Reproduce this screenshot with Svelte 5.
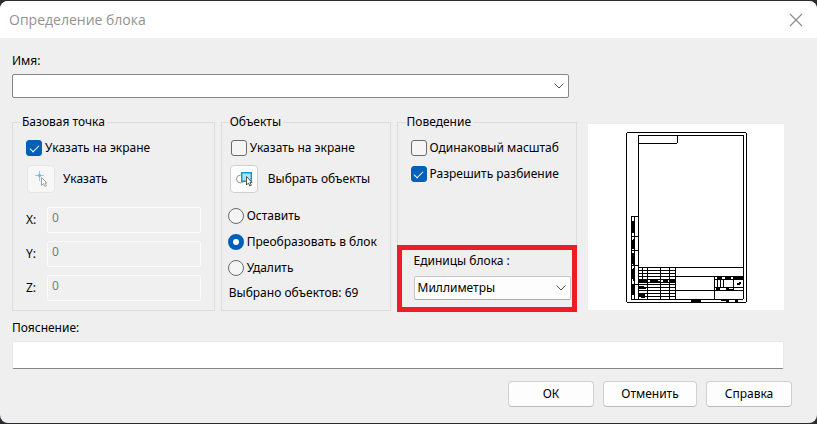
<script lang="ts">
  type Axis = 'X' | 'Y' | 'Z';

  const axes: Axis[] = ['X', 'Y', 'Z'];
  const units = ['Миллиметры', 'Сантиметры', 'Метры', 'Дюймы'];
  const modes = [
    { id: 'keep', label: 'Оставить' },
    { id: 'convert', label: 'Преобразовать в блок' },
    { id: 'remove', label: 'Удалить' },
  ];

  let blockName = $state('');
  let pickPoint = $state(true);
  let pickObjects = $state(false);
  let uniformScale = $state(false);
  let allowExplode = $state(true);
  let mode = $state('convert');
  let unit = $state('Миллиметры');
  let note = $state('');
  let point = $state<Record<Axis, string>>({ X: '0', Y: '0', Z: '0' });
  let selectedCount = 69;
</script>

<div class="dialog" role="dialog" aria-labelledby="dialog-title">
  <header>
    <h1 id="dialog-title">Определение блока</h1>
    <button class="close" aria-label="Закрыть">
      <svg width="14" height="14" viewBox="0 0 14 14"><path d="M1 1 13 13M13 1 1 13" /></svg>
    </button>
  </header>

  <main>
    <label class="field-label" for="block-name">Имя:</label>
    <div class="combo name-combo">
      <select id="block-name" bind:value={blockName}>
        <option value=""></option>
      </select>
      <svg width="10" height="6" viewBox="0 0 10 6"><path d="M.5.5 5 5 9.5.5" /></svg>
    </div>

    <div class="columns">
      <fieldset class="point">
        <legend>Базовая точка</legend>
        <label class="option"><input type="checkbox" bind:checked={pickPoint} />Указать на экране</label>
        <div class="pick">
          <button class="tool" id="pick-point" disabled={pickPoint}>
            <svg width="16" height="18" viewBox="0 0 16 18">
              <path class="spark" d="M6.500 1v10M2 5.500h9" />
              <path class="spark-core" d="M6.500 3 7.500 4.500 9 5.500 7.500 6.500 6.500 8 5.500 6.500 4 5.500 5.500 4.500Z" />
              <path class="arrow faded" d="M8.500 7.500v8l2-2 1.300 3 1.500-.7-1.300-2.800H14Z" />
            </svg>
          </button>
          <label for="pick-point">Указать</label>
        </div>
        <div class="coords">
          {#each axes as axis}
            <label for="coord-{axis}">{axis}:</label>
            <input id="coord-{axis}" type="text" bind:value={point[axis]} disabled={pickPoint} />
          {/each}
        </div>
      </fieldset>

      <fieldset class="objects">
        <legend>Объекты</legend>
        <label class="option"><input type="checkbox" bind:checked={pickObjects} />Указать на экране</label>
        <div class="pick">
          <button class="tool" id="pick-objects">
            <svg width="18" height="18" viewBox="0 0 18 18">
              <circle class="ring" cx="5.500" cy="9" r="4" />
              <rect class="window" x="6.750" y="2.750" width="9.500" height="8.500" />
              <path class="arrow" d="M11.500 6.500v8.500l2-2 1.300 3 1.500-.7-1.300-2.800H17Z" />
            </svg>
          </button>
          <label for="pick-objects">Выбрать объекты</label>
        </div>
        <div class="modes">
          {#each modes as m}
            <label class="option"><input type="radio" name="mode" value={m.id} bind:group={mode} />{m.label}</label>
          {/each}
        </div>
        <p class="count">Выбрано объектов: {selectedCount}</p>
      </fieldset>

      <div class="stack">
        <fieldset class="behavior">
          <legend>Поведение</legend>
          <label class="option"><input type="checkbox" bind:checked={uniformScale} />Одинаковый масштаб</label>
          <label class="option"><input type="checkbox" bind:checked={allowExplode} />Разрешить разбиение</label>
        </fieldset>
        <div class="units">
          <label for="units">Единицы блока :</label>
          <div class="combo">
            <select id="units" bind:value={unit}>
              {#each units as u}<option>{u}</option>{/each}
            </select>
            <svg width="10" height="6" viewBox="0 0 10 6"><path d="M.5.5 5 5 9.5.5" /></svg>
          </div>
        </div>
      </div>

      <div class="preview">
        <svg viewBox="0 0 196 186" shape-rendering="crispEdges" aria-hidden="true">
          <!-- sheet and frame -->
          <path d="M39 8.500H158M38.500 9V178M158.500 9V178M39 178.500H158" />
          <path d="M50.500 11.500H155.500V175.500H50.500ZM50.500 19.500H89.500V11.500" />
          <!-- binding strip -->
          <path d="M50 92.500H43.500V175.500H50M46.500 92V175M43 112.500H50M43 126.500H50M43 141.500H50M43 160.500H50" />
          <path class="ink" d="M44 97h2v-1h1v13h-3zM44 116h1v-1h1v2h1v8h-3zM44 129h3v12h-2v-1h-1zM44 145h1v-1h1v2h1v11h-2v-2h-1zM44 161h2v1h1v11h-1v-2h-2z" />
          <!-- title block -->
          <path d="M50 143.500H155M50 152.500H155M87.500 143V175M87 166.500H155" />
          <path d="M50 146.500H87M50 149.500H87M50 155.500H87M50 158.500H87M50 160.500H87M50 163.500H87M50 166.500H87M50 169.500H87M50 172.500H87" />
          <path d="M54.500 143V158M59.500 143V175M72.500 143V175M81.500 143V175" />
          <path class="ink" d="M51 156h8v2h-8zM62 156h8v2h-8zM70 157h3v1h-3zM75 156h5v2h-5zM82 156h5v2h-5zM51 162h5v1h-5zM51 164h7v1h-7zM51 170h6v2h-6zM53 173h4v1h-4z" />
          <path d="M126.500 152V175M126 155.500H155M126 163.500H155M129.500 155V163M132.500 155V163M135.500 155V163M145.500 152V166" />
          <path class="ink" d="M129 153h5v2h-5zM137 153h6v2h-6zM146 153h9v2h-9zM149 159h2v-1h1v3h-3zM152 158h1v2h-1zM128 164h4v2h-4zM138 164h3v1h4v1h-7z" />
          <path class="ink" d="M103 176h10v2h-10zM133 176h8v2h-3v-1h-5zM147 176h3v2h-3z" />
        </svg>
      </div>
    </div>

    <label class="field-label" for="note">Пояснение:</label>
    <input id="note" class="note" type="text" bind:value={note} />
  </main>

  <footer>
    <button>ОК</button>
    <button class="wide">Отменить</button>
    <button>Справка</button>
  </footer>
</div>

<style>
  :global(body) { background: #2b2a2c; }

  .dialog {
    margin: 1px 0 2px;
    border-radius: 8px;
    overflow: hidden;
    background: #efefef;
    color: #000;
    font-family: "Noto Sans", Tahoma, sans-serif;
    font-size: 12px;
    line-height: 16px;
  }

  .dialog * { box-sizing: border-box; }

  input, select, button { font: inherit; color: inherit; margin: 0; }

  header {
    display: flex; align-items: center; justify-content: space-between;
    height: 37px; padding: 0 14px 0 9px;
    background: #fff;
  }

  h1 { margin: 0; font: 400 14px/20px "Open Sans", "Noto Sans", sans-serif; color: #929292; }

  .close { display: flex; padding: 0; border: 0; background: none; }
  .close path { fill: none; stroke: #8c8c8c; stroke-width: 1.2; }

  main { padding: 15px 33px 0 12px; }

  .field-label { display: block; margin-bottom: 5px; }

  .combo { position: relative; }
  .combo select {
    display: block; appearance: none;
    width: 100%; height: 24px; padding: 0 24px 0 3px;
    border: 1px solid #c6c6c6; border-bottom-color: #ababab; border-radius: 2px;
    background: #fdfdfd;
  }
  .combo svg { position: absolute; right: 5px; top: 9px; pointer-events: none; }
  .combo path { fill: none; stroke: #555; }
  .name-combo { width: calc(100% - 215px); }
  .name-combo select { border-color: #868686; background: #fff; }

  .columns {
    display: grid;
    grid-template-columns: 203fr 170fr 181fr 201fr;
    column-gap: 6px;
    margin: 17px 0 9px;
  }

  fieldset { min-width: 0; margin: 0; border: 1px solid #dcdcdc; padding: 11px 13px 9px; }
  legend { margin-left: -5px; padding: 0 2px 0 1px; line-height: 14px; }

  .option { display: flex; align-items: center; gap: 3px; height: 16px; white-space: nowrap; }

  input[type="checkbox"], input[type="radio"] {
    appearance: none;
    display: grid; place-items: center; flex-shrink: 0;
    width: 16px; height: 16px;
    border: 1px solid #6b6b6b; border-radius: 3px;
    background: #f5f5f5;
  }
  input[type="checkbox"]:checked { border-color: #005fb8; background: #005fb8; }
  input[type="checkbox"]:checked::after {
    content: ''; width: 8px; height: 4px; margin-bottom: 2px;
    border: solid #fff; border-width: 0 0 1px 1px;
    transform: rotate(-45deg);
  }
  input[type="radio"] { border-radius: 50%; }
  input[type="radio"]:checked { border: 5px solid #005fb8; background: #fff; }

  .pick { display: flex; align-items: center; margin: 9px 0 0 1px; white-space: nowrap; }
  .tool {
    display: grid; place-items: center; flex-shrink: 0;
    width: 28px; height: 28px; margin-right: 8px; padding: 0;
    border: 1px solid #cfcfcf; border-radius: 4px;
    background: #fdfdfd;
  }
  .tool:disabled { border-color: #e6e6e6; background: #f7f7f7; }
  .spark { stroke: #8fd2ed; fill: none; }
  .spark-core { fill: #62bfe4; }
  .arrow { fill: #fff; stroke: #444; stroke-width: 0.9; }
  .arrow.faded { stroke: #999; }
  .ring { fill: none; stroke: #999; }
  .window { fill: #b5e1f5; stroke: #0a9bdc; stroke-width: 1.5; }

  .coords {
    display: grid; grid-template-columns: 21px 1fr; row-gap: 8px;
    align-items: center;
    margin-top: 14px;
  }
  .coords input {
    width: 100%; min-width: 0; height: 26px; padding: 0 4px 6px;
    border: 1px solid #fafafa; border-radius: 2px;
    background: #f0f0f0; color: #7b7b7b;
  }

  .objects { padding: 11px 6px 9px; }
  .objects legend { margin-left: 1px; }
  .objects > .option { margin-left: 3px; }
  .objects .pick { margin-left: 2px; }
  .objects .tool { margin-right: 10px; }
  .modes { display: grid; row-gap: 10px; margin-top: 15px; }
  .count { margin: 9px 0 0 1px; white-space: nowrap; }

  .stack { display: flex; flex-direction: column; min-width: 0; }
  .behavior { flex: 1; border-bottom: 0; }
  .behavior .option + .option { margin-top: 10px; }
  .units { margin-bottom: -1px; border: 5px solid #ee1c24; padding: 3px 1px 7px 12px; }
  .units label { display: block; margin-bottom: 7px; }

  .preview { margin: 9px 0 1px 5px; background: #fff; }
  .preview svg { display: block; width: 100%; }
  .preview path { fill: none; stroke: #000; }
  .preview .ink { fill: #000; stroke: none; }

  .note {
    display: block; width: 100%; height: 28px; padding: 0 4px;
    border: 1px solid #e8e8e8; border-bottom-color: #868686; border-radius: 2px;
    background: #fff;
  }

  footer { display: flex; justify-content: flex-end; gap: 9px; padding: 12px 25px 16px; }
  footer button {
    min-width: 86px; height: 26px; padding: 0 17px;
    border: 1px solid #d0d0d0; border-bottom-color: #bcbcbc; border-radius: 4px;
    background: #fdfdfd;
  }
  footer .wide { min-width: 94px; }
</style>
